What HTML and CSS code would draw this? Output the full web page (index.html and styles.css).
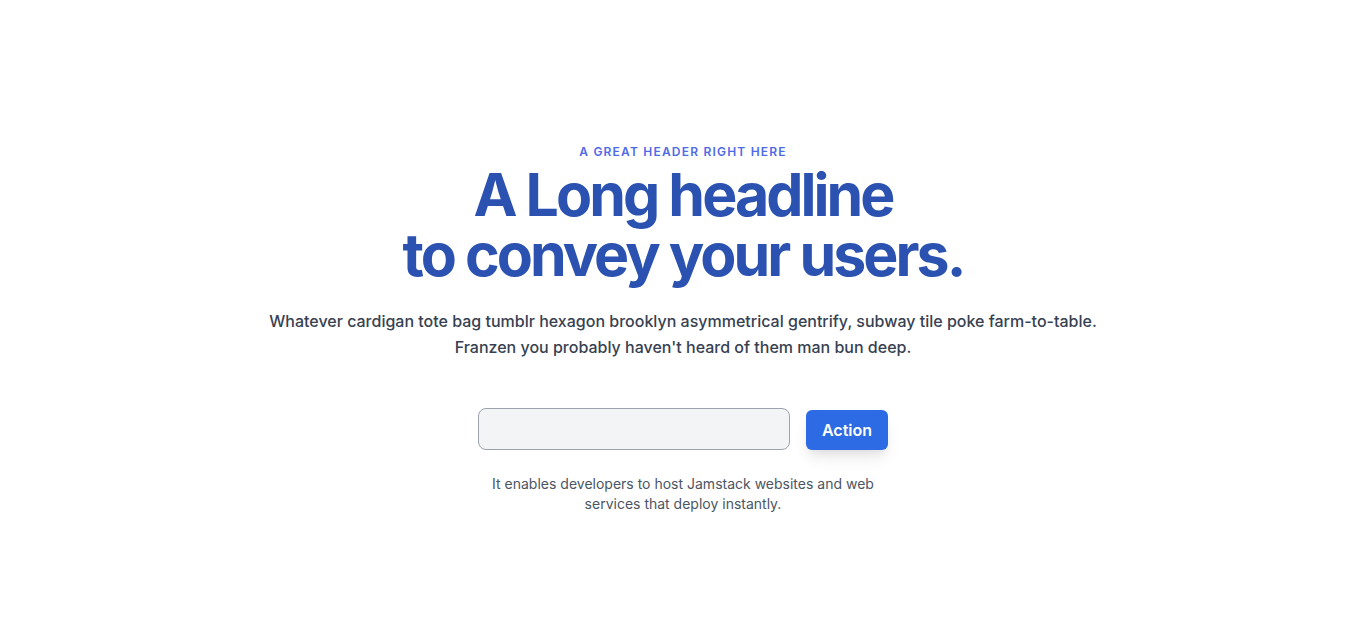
FILE: index.html
```html
<!DOCTYPE html>
<html lang="en">
<head>
<meta charset="utf-8">
<title>Hero</title>
<link rel="stylesheet" href="styles.css">
</head>
<body>
<section class="hero">
  <p class="kicker">A great header right here</p>
  <h1 class="headline">A Long headline<br>to convey your users.</h1>
  <p class="lead">Whatever cardigan tote bag tumblr hexagon brooklyn asymmetrical gentrify, subway tile poke farm-to-table.<br>Franzen you probably haven't heard of them man bun deep.</p>
  <form class="signup">
    <input class="field" type="text" aria-label="Email">
    <button class="action" type="button">Action</button>
  </form>
  <p class="note">It enables developers to host Jamstack websites and web services that deploy instantly.</p>
</section>
</body>
</html>
```
FILE: styles.css
```css
* { box-sizing: border-box; }
html, body { margin: 0; padding: 0; background: #fff; }
body { font-family: Inter, "Noto Sans", sans-serif; }

.hero {
  display: flex;
  flex-direction: column;
  align-items: center;
  text-align: center;
  padding-top: 144px;
}

.kicker {
  margin: 0;
  font-size: 12px;
  line-height: 16px;
  font-weight: 600;
  letter-spacing: 0.1em;
  text-transform: uppercase;
  color: #4f6ae6;
}

.headline {
  margin: 5px 0 0;
  font-size: 59px;
  line-height: 60px;
  font-weight: 700;
  letter-spacing: -0.05em;
  color: #2b52b1;
}

.lead {
  margin: 23px 0 0;
  font-size: 16px;
  line-height: 26px;
  font-weight: 500;
  color: #374151;
}

.signup {
  display: flex;
  align-items: flex-end;
  gap: 16px;
  margin-top: 48px;
}

.field {
  width: 312px;
  height: 42px;
  background: #f3f4f6;
  border: 1px solid #9ca3af;
  border-radius: 8px;
  outline: none;
}

.action {
  width: 82px;
  height: 40px;
  border: 0;
  border-radius: 6px;
  background: #2c6be3;
  color: #fff;
  font-family: inherit;
  font-size: 16px;
  font-weight: 600;
  box-shadow: 0 10px 15px -3px rgba(0,0,0,0.1), 0 4px 6px -2px rgba(0,0,0,0.05);
}

.note {
  margin: 24px 0 0;
  max-width: 400px;
  font-size: 14px;
  line-height: 20px;
  color: #4b5563;
}
```
